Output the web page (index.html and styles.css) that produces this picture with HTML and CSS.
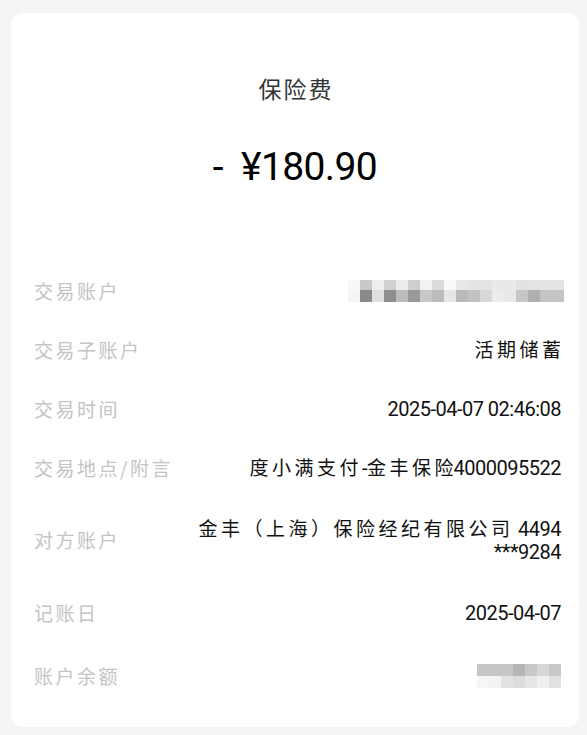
FILE: index.html
```html
<!DOCTYPE html>
<html lang="zh-CN">
<head>
<meta charset="utf-8">
<title>保险费</title>
<link rel="stylesheet" href="styles.css">
</head>
<body>
<div class="card">
  <div class="title">保险费</div>
  <div class="amount"><span class="sign">-</span>¥180.90</div>
  <div class="rows">
    <div class="row">
      <div class="label">交易账户</div>
      <div class="mosaic wide">
        <div class="mrow">
          <i style="background:#f8f8f8"></i><i style="background:#c8c8c8"></i><i style="background:#eeeeee"></i><i style="background:#d0d0d0"></i><i style="background:#ececec"></i><i style="background:#cfcfcf"></i><i style="background:#f2f2f2"></i><i style="background:#dcdcdc"></i><i style="background:#fafafa"></i><i style="background:#e8e8e8"></i><i style="background:#e4e4e4"></i><i style="background:#e4e4e4"></i><i style="background:#e9e9e9"></i><i style="background:#e9e9e9"></i><i style="background:#e2e2e2"></i><i style="background:#e4e4e4"></i><i style="background:#e4e4e4"></i><i style="background:#e4e4e4"></i>
        </div>
        <div class="mrow tall">
          <i style="background:#f5f5f5"></i><i style="background:#8a8a8a"></i><i style="background:#e0e0e0"></i><i style="background:#8f8f8f"></i><i style="background:#bdbdbd"></i><i style="background:#999999"></i><i style="background:#c8c8c8"></i><i style="background:#bcbcbc"></i><i style="background:#e6e6e6"></i><i style="background:#bababa"></i><i style="background:#c2c2c2"></i><i style="background:#d8d8d8"></i><i style="background:#ececec"></i><i style="background:#e8e8e8"></i><i style="background:#c6c6c6"></i><i style="background:#b0b0b0"></i><i style="background:#c4c4c4"></i><i style="background:#c4c4c4"></i>
        </div>
      </div>
    </div>
    <div class="row">
      <div class="label">交易子账户</div>
      <div class="value"><span class="cn">活期储蓄</span></div>
    </div>
    <div class="row">
      <div class="label">交易时间</div>
      <div class="value">2025-04-07 02:46:08</div>
    </div>
    <div class="row">
      <div class="label">交易地点/附言</div>
      <div class="value"><span class="cn">度小满支付</span>-<span class="cn">金丰保险</span>4000095522</div>
    </div>
    <div class="row multi">
      <div class="label">对方账户</div>
      <div class="value"><span class="cn">金丰（上海）保险经纪有限公司</span> 4494<br>***9284</div>
    </div>
    <div class="row">
      <div class="label">记账日</div>
      <div class="value">2025-04-07</div>
    </div>
    <div class="row last">
      <div class="label">账户余额</div>
      <div class="mosaic small">
        <div class="mrow">
          <i style="background:#c6c6c6"></i><i style="background:#c6c6c6"></i><i style="background:#c6c6c6"></i><i style="background:#b5b5b5"></i><i style="background:#c8c8c8"></i><i style="background:#d6d6d6"></i><i style="background:#c8c8c8"></i>
        </div>
        <div class="mrow">
          <i style="background:#f6f6f6"></i><i style="background:#f3f3f3"></i><i style="background:#e2e2e2"></i><i style="background:#dcdcdc"></i><i style="background:#e6e6e6"></i><i style="background:#f0f0f0"></i><i style="background:#e2e2e2"></i>
        </div>
      </div>
    </div>
  </div>
</div>
</body>
</html>
```
FILE: styles.css
```css
html, body {
  margin: 0;
  padding: 0;
}
body {
  background: #f5f5f5;
  padding: 13px 8px 8px 11px;
  font-family: Roboto, "Noto Sans CJK SC", sans-serif;
}
.card {
  width: 568px;
  height: 714px;
  box-sizing: border-box;
  background: #ffffff;
  border-radius: 12px;
  padding: 60px 18px 0 23px;
  display: flex;
  flex-direction: column;
}
.title {
  text-align: center;
  font-family: "Noto Sans CJK SC", sans-serif;
  font-size: 23px;
  line-height: 31px;
  letter-spacing: 2px;
  color: #333333;
  margin-right: 3px;
}
.amount {
  margin-top: 38px;
  text-align: center;
  font-family: Roboto, sans-serif;
  font-size: 39px;
  line-height: 50px;
  letter-spacing: -0.6px;
  color: #000000;
  margin-right: 5px;
}
.sign {
  margin-right: 18px;
}
.rows {
  margin-top: 69px;
  display: flex;
  flex-direction: column;
}
.row {
  display: flex;
  justify-content: space-between;
  align-items: center;
  min-height: 59px;
  box-sizing: border-box;
}
.label {
  font-family: "Noto Sans CJK SC", sans-serif;
  font-size: 19px;
  letter-spacing: 2.5px;
  color: #c4c4c4;
  line-height: 22px;
  white-space: nowrap;
}
.value {
  font-family: Roboto, "Noto Sans CJK SC", sans-serif;
  font-size: 20px;
  letter-spacing: -0.5px;
  line-height: 22px;
  color: #111111;
  text-align: right;
  white-space: nowrap;
}
.cn {
  font-family: "Noto Sans CJK SC", sans-serif;
  font-size: 19px;
  letter-spacing: 3.5px;
}
.value > .cn:last-child {
  margin-right: -3.5px;
}
.row.multi {
  min-height: 86px;
}
.row.multi .value {
  line-height: 23px;
}
.row.last {
  min-height: 64px;
  padding-top: 4px;
}
.mosaic {
  display: flex;
  flex-direction: column;
}
.mosaic.wide {
  margin-right: -3px;
}
.mrow {
  display: flex;
  height: 10px;
}
.mrow.tall {
  height: 12px;
}
.mrow i {
  display: block;
  width: 12px;
  height: 100%;
}
.mosaic.small .mrow {
  height: 12px;
}
```
